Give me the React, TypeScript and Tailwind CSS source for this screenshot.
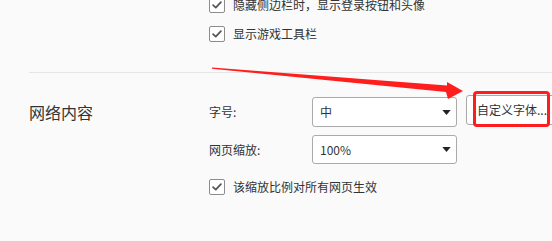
import React from "react";

const Checkbox: React.FC = () => (
  <span className="flex h-4 w-4 shrink-0 items-center justify-center rounded-[2px] border border-[#8c8c8c] bg-white">
    <svg viewBox="0 0 16 16" className="h-[14px] w-[14px]" fill="none">
      <path d="M3.5 8.2 L6.6 11 L12.5 4.8" stroke="#555" strokeWidth="2" strokeLinecap="round" strokeLinejoin="round" />
    </svg>
  </span>
);

const CheckRow: React.FC<{ label: string }> = ({ label }) => (
  <div className="flex h-4 items-center gap-2 text-[12px] text-[#333]">
    <Checkbox />
    <span className="whitespace-nowrap">{label}</span>
  </div>
);

const Select: React.FC<{ value: string; h: string }> = ({ value, h }) => (
  <div
    className={`flex w-[145px] ${h} shrink-0 items-center justify-between rounded-[3px] border border-[#aaa] bg-white pl-[7px] pr-[5px] text-[12px] text-[#333]`}
  >
    <span>{value}</span>
    <svg viewBox="0 0 10 6" className="h-[5px] w-[9px]">
      <polygon points="0,0 10,0 5,6" fill="#222" />
    </svg>
  </div>
);

export default function App() {
  return (
    <div
      className="relative h-[241px] w-[552px] overflow-hidden bg-[#fafafa]"
      style={{ fontFamily: '"Noto Sans CJK SC", "Noto Sans", sans-serif' }}
    >
      {/* top checkboxes (cut off) */}
      <div className="-mt-[3px] flex flex-col gap-[13px] pl-[209px]">
        <CheckRow label="隐藏侧边栏时，显示登录按钮和头像" />
        <CheckRow label="显示游戏工具栏" />
      </div>

      <div className="ml-[29px] mt-[30px] h-px bg-[#e6e6e6]" />

      {/* 网络内容 section */}
      <div className="flex pl-[29px] pt-[24px]">
        <div className="w-[180px] shrink-0 text-[16px] leading-[30px] text-[#333]">网络内容</div>
        <div className="flex shrink-0 flex-col">
          <div className="flex h-[30px] items-center">
            <span className="w-[103px] shrink-0 text-[12px] text-[#333]">字号:</span>
            <Select value="中" h="h-[30px]" />
            <button className="-mt-[4px] ml-[9px] h-[30px] w-[96px] shrink-0 rounded-[3px] border border-[#aaa] bg-white pl-[10px] text-left text-[12px] text-[#333]">
              自定义字体...
            </button>
          </div>
          <div className="mt-[8px] flex h-[29px] items-center">
            <span className="w-[103px] shrink-0 text-[12px] text-[#333]">网页缩放:</span>
            <Select value="100%" h="h-[29px]" />
          </div>
          <div className="mt-[15px]">
            <CheckRow label="该缩放比例对所有网页生效" />
          </div>
        </div>
      </div>

      {/* annotation: red arrow + highlight box */}
      <svg className="pointer-events-none absolute left-0 top-0" width="552" height="241">
        <polygon points="212,67.5 447,85.5 447,82 463,91 448,99 446,92 212,68.8" fill="#ff1e1e" />
      </svg>
      <div className="pointer-events-none absolute left-[473px] top-[91px] h-[36px] w-[77px] rounded-[4px] border-[3px] border-[#ff1e1e]" />
    </div>
  );
}
